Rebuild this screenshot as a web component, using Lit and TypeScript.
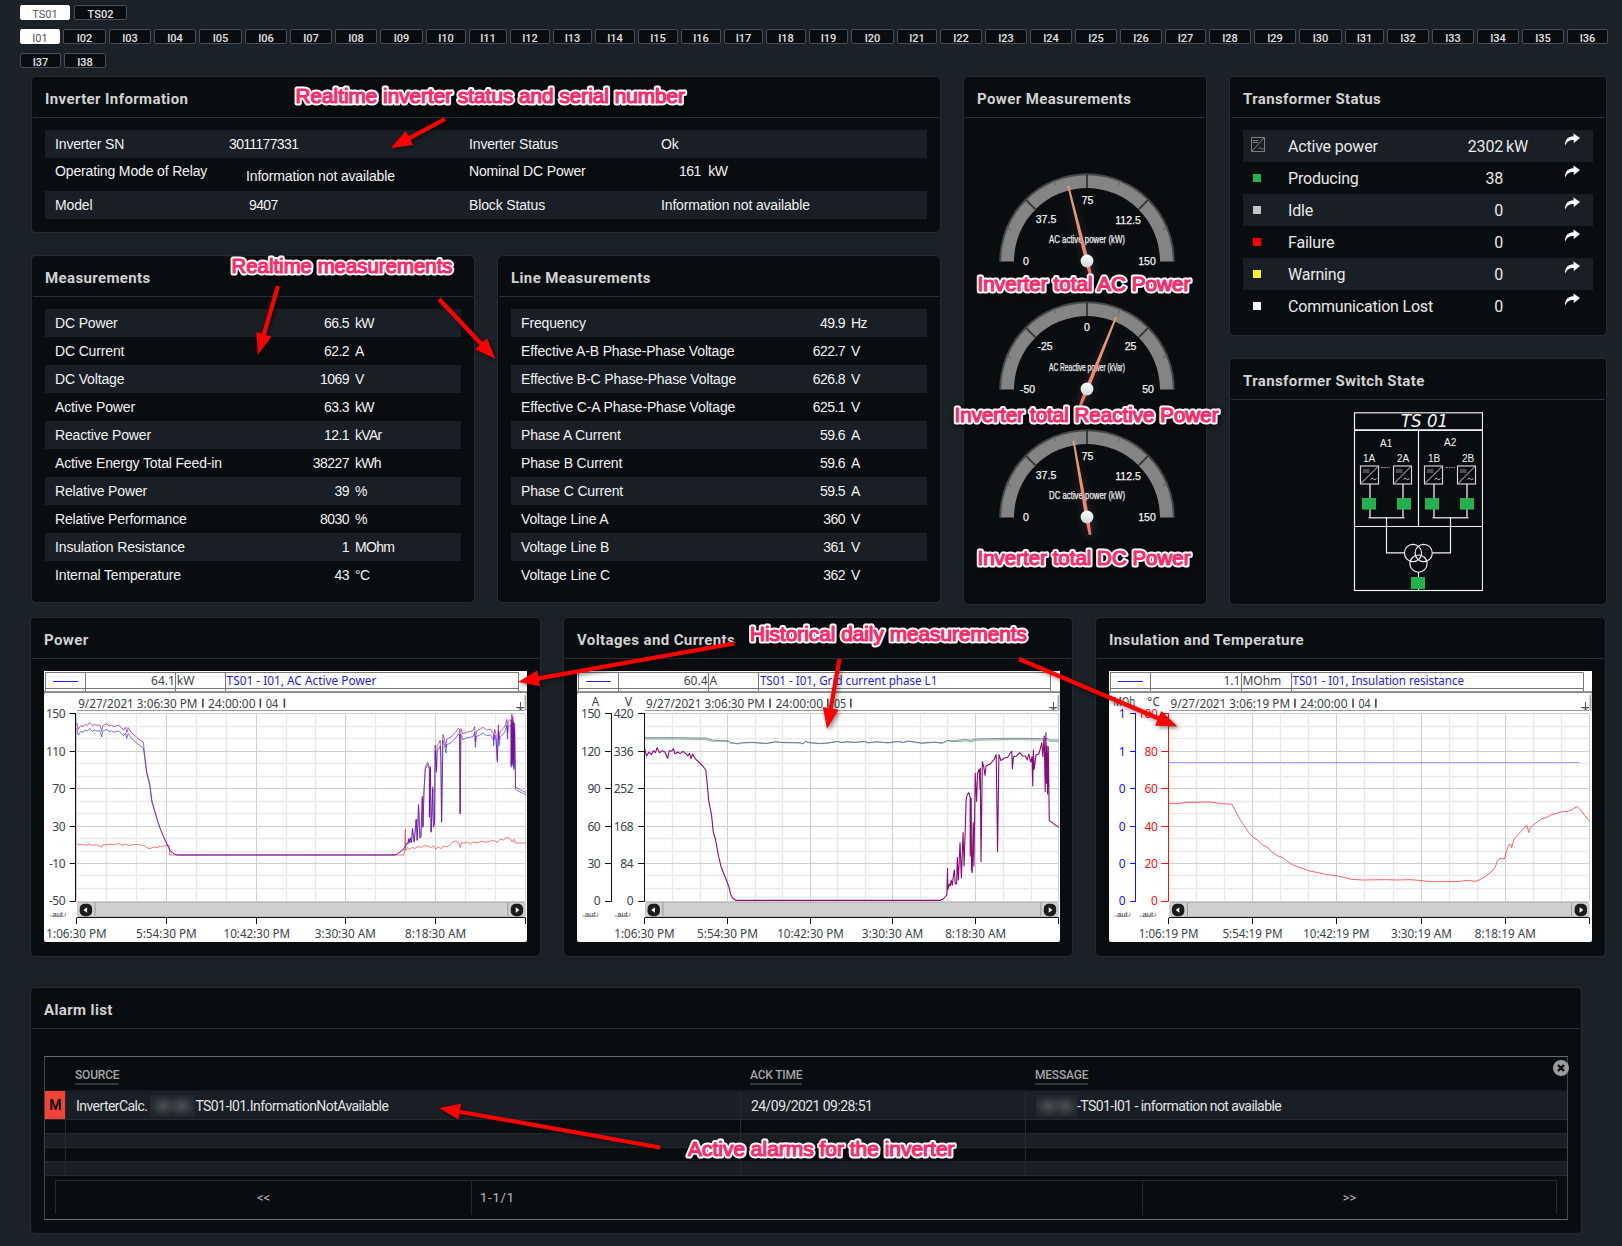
import { LitElement, html, svg, css } from "lit";
import { customElement, property } from "lit/decorators.js";

type Pt = [number, number];

/* ---------- data ---------- */

const inverterEdges = [
  20, 63, 109, 154, 199, 245, 290, 335, 380, 426, 469, 510, 553, 595, 638, 681, 724, 766, 809, 851, 897, 940, 985,
  1030, 1075, 1120, 1165, 1209, 1254, 1299, 1345, 1387, 1432, 1477, 1522, 1567, 1611,
];
const inverterTabs = inverterEdges.slice(0, -1).map((x, i) => ({
  name: "I" + String(i + 1).padStart(2, "0"),
  width: inverterEdges[i + 1] - x - 3,
}));

const measurements = [
  ["DC Power", "66.5", "kW"],
  ["DC Current", "62.2", "A"],
  ["DC Voltage", "1069", "V"],
  ["Active Power", "63.3", "kW"],
  ["Reactive Power", "12.1", "kVAr"],
  ["Active Energy Total Feed-in", "38227", "kWh"],
  ["Relative Power", "39", "%"],
  ["Relative Performance", "8030", "%"],
  ["Insulation Resistance", "1", "MOhm"],
  ["Internal Temperature", "43", "°C"],
];
const lineMeasurements = [
  ["Frequency", "49.9", "Hz"],
  ["Effective A-B Phase-Phase Voltage", "622.7", "V"],
  ["Effective B-C Phase-Phase Voltage", "626.8", "V"],
  ["Effective C-A Phase-Phase Voltage", "625.1", "V"],
  ["Phase A Current", "59.6", "A"],
  ["Phase B Current", "59.6", "A"],
  ["Phase C Current", "59.5", "A"],
  ["Voltage Line A", "360", "V"],
  ["Voltage Line B", "361", "V"],
  ["Voltage Line C", "362", "V"],
];
const statusRows = [
  ["Active power", "2302", "kW", "inverter"],
  ["Producing", "38", "", "#22b14c"],
  ["Idle", "0", "", "#c3c3c3"],
  ["Failure", "0", "", "#ff0000"],
  ["Warning", "0", "", "#fff21f"],
  ["Communication Lost", "0", "", "#ffffff"],
];

/* ---------- card ---------- */

@customElement("dash-card")
class DashCard extends LitElement {
  @property() heading = "";
  static styles = css`
    :host {
      display: flex;
      flex-direction: column;
      box-sizing: border-box;
      border: 1px solid #252b30;
      border-radius: 5px;
      background: #0a0d0f;
    }
    .head {
      height: 40px;
      box-sizing: border-box;
      padding: 4px 0 0 12px;
      margin: 0 1px;
      display: flex;
      align-items: center;
      font: 700 15px Roboto, "Liberation Sans", sans-serif;
      letter-spacing: 0.38px;
      color: #d2d2d2;
      white-space: nowrap;
    }
    .rule {
      height: 1px;
      margin: 0 1px;
      background: #25313a;
    }
    .body {
      flex: 1;
      padding: 12px 13px 0;
    }
  `;
  render() {
    return html`<div class="head">${this.heading}</div>
      <div class="rule"></div>
      <div class="body"><slot></slot></div>`;
  }
}

/* ---------- value table ---------- */

@customElement("value-table")
class ValueTable extends LitElement {
  @property({ attribute: false }) rows: string[][] = [];
  @property({ type: Number }) edge = 303;
  static styles = css`
    :host {
      display: block;
      font: 14px "Liberation Sans", Arial, sans-serif;
      letter-spacing: -0.15px;
      color: #f2f2f2;
    }
    .row {
      display: flex;
      align-items: center;
      height: 28px;
      box-sizing: border-box;
      padding: 0 0 1px 10px;
      white-space: nowrap;
    }
    .row:nth-child(odd) {
      background: #191f25;
    }
    .value {
      flex: 1;
      text-align: right;
      letter-spacing: -0.55px;
    }
    .unit {
      letter-spacing: -0.7px;
    }
    .lead {
      display: flex;
      padding-right: 6px;
      box-sizing: border-box;
    }
  `;
  render() {
    return this.rows.map(
      ([label, value, unit]) => html`<div class="row">
        <div class="lead" style="width:${this.edge - 3}px"><span>${label}</span><span class="value">${value}</span></div>
        <span class="unit">${unit}</span>
      </div>`
    );
  }
}

/* ---------- gauge ---------- */

@customElement("half-gauge")
class HalfGauge extends LitElement {
  @property() caption = "";
  @property({ attribute: false }) labels: { t: string; x: number; y: number }[] = [];
  @property({ type: Number }) angle = 0;
  static styles = css`
    :host {
      display: block;
      height: 128px;
    }
    svg {
      display: block;
      overflow: visible;
    }
    .t {
      font: 10.5px "Liberation Sans", Arial, sans-serif;
      fill: #f2f2f2;
      stroke: #f2f2f2;
      stroke-width: 0.25;
    }
  `;
  render() {
    const ticks = [1, 2, 3, 4, 5, 6, 7].map((i) => {
      const a = Math.PI - (i * Math.PI) / 8;
      const major = i % 2 === 0;
      const r0 = major ? 73 : 82;
      return svg`<line x1=${Math.cos(a) * r0} y1=${-Math.sin(a) * r0} x2=${Math.cos(a) * 87} y2=${-Math.sin(a) * 87}
        stroke=${major ? "#3a3a3a" : "#5e5e5e"} stroke-width=${major ? 2 : 1} />`;
    });
    return html`<svg width="216" height="128" viewBox="-110 -88 216 128">
      <defs>
        <linearGradient id="n" gradientUnits="userSpaceOnUse" x1="0" y1="-76" x2="0" y2="18">
          <stop offset="0" stop-color="#e0a173" />
          <stop offset="0.6" stop-color="#ef8a7a" />
          <stop offset="1" stop-color="#f56f70" />
        </linearGradient>
        <linearGradient id="k" x1="0" y1="0" x2="0" y2="1">
          <stop offset="0" stop-color="#ffffff" />
          <stop offset="1" stop-color="#d4d4d4" />
        </linearGradient>
        <filter id="g" x="-200%" y="-20%" width="500%" height="140%"><feGaussianBlur stdDeviation="5" /></filter>
      </defs>
      <path d="M-87.7 0A87.7 87.7 0 0 1 87.7 0V1H73V0A73 73 0 0 0 -73 0V1H-87.7Z" fill="#484848" />
      <path d="M-85.7 0A85.7 85.7 0 0 1 85.7 0H73A73 73 0 0 0 -73 0Z" fill="#848484" />
      ${ticks}
      ${this.labels.map(
        (l) => svg`<text class="t" x=${l.x} y=${l.y} text-anchor="middle">${l.t}</text>`
      )}
      <text class="t" x="-38" y="-18.5" textLength="76" lengthAdjust="spacingAndGlyphs">${this.caption}</text>
      <g transform="rotate(${this.angle})">
        <path d="M-2 18L0 -76L3 18Z" fill="#ffffff" opacity="0.22" filter="url(#g)" />
        <path d="M-0.9 -77.5H0.9L2 0L1.4 18H-1.4L-2 0Z" fill="url(#n)" />
      </g>
      <circle r="6.4" fill="url(#k)" />
    </svg>`;
  }
}

/* ---------- trend chart ---------- */

interface Axis {
  x: number;
  tick: number;
  end: number;
  color: string;
  values: string[];
  unit?: string;
  unitX?: number;
  unitLen?: number;
  autoX: number;
}
interface Trace {
  color: string;
  pts: Pt[];
  opacity?: number;
  width?: number;
}
interface Trend {
  scale: number;
  left: number;
  cells: number[];
  sample: Pt;
  value: string;
  unit: string;
  name: string;
  nameEnd: number;
  stamp: { parts: { t: string; a: number; b: number }[]; bars: number[] };
  axes: Axis[];
  grid: number[];
  knobs: number[];
  times: { t: string; a: number; b: number }[];
  traces: Trace[];
}

const tickY = [310, 424, 535, 649, 760, 873];

@customElement("trend-chart")
class TrendChart extends LitElement {
  @property({ attribute: false }) trend!: Trend;
  static styles = css`
    :host {
      display: block;
    }
    svg {
      display: block;
    }
    text {
      font: 12px "Noto Sans", "Open Sans", sans-serif;
      fill: #3a4248;
    }
    .name {
      fill: #1a1af0;
    }
    .auto {
      font: 8px "Liberation Sans", Arial, sans-serif;
      fill: #444;
    }
  `;
  render() {
    const c = this.trend;
    const X = (v: number) => +((v - c.left) / c.scale).toFixed(2);
    const Y = (v: number) => +((v - 183) / 3).toFixed(2);
    const fit = (t: string, a: number, b: number, y: number, cls = "") =>
      svg`<text class=${cls} x=${X(a)} y=${Y(y)} textLength=${X(b) - X(a)} lengthAdjust="spacingAndGlyphs">${t}</text>`;
    const [l0, l1, l2, l3, l4] = c.cells.map(X);
    const gx0 = X(c.grid[0]);
    const gx1 = X(c.grid[5]);
    const snap = (v: number) => Math.floor(v) + 0.5;
    const minorX: number[] = [];
    const minorY: number[] = [];
    for (let i = 0; i < 5; i++)
      for (let k = 1; k < 3; k++) {
        minorX.push(X(c.grid[i] + ((c.grid[i + 1] - c.grid[i]) * k) / 3));
        minorY.push(Y(tickY[i] + ((tickY[i + 1] - tickY[i]) * k) / 3));
      }
    return html`<svg width="483" height="271" viewBox="0 0 483 271">
      <rect width="483" height="20.6" fill="#fff" />
      <rect y="20.6" width="483" height="3" fill="#8a8a8a" />
      <rect y="22" width="483" height="249" rx="2" fill="#fff" />
      <path d="M${snap(l0)} 20V1.5H${snap(l4)}V20M${snap(l0)} 17.5H${snap(l4)}M${snap(l1)} 1.5V20M${snap(l2)} 1.5V20M${snap(l3)} 1.5V20"
        fill="none" stroke="#777" />
      <line x1=${X(c.sample[0])} x2=${X(c.sample[1])} y1="10.5" y2="10.5" stroke="#2020f0" />
      <text x=${l2 - 1} y="14" text-anchor="end">${c.value}</text>
      <text x=${l2 + 1} y="14">${c.unit}</text>
      ${fit(c.name, c.cells[3] + 4, c.nameEnd, 225, "name")}
      ${c.stamp.parts.map((p) => fit(p.t, p.a, p.b, 294))}
      ${c.stamp.bars.map((b) => svg`<rect x=${X(b) - 0.8} y=${Y(266)} width="1.6" height="9" fill="#444" />`)}
      <line x1=${gx0} x2="480" y1="39.5" y2="39.5" stroke="#9a9a9a" />
      <path d="M481.5 24V40" stroke="#aaa" stroke-width="2" />
      <path d="M472 36.5H480M476.5 31V39M474.5 37L476.5 39L478.5 37" fill="none" stroke="#555" />
      ${minorX.map((x) => svg`<line x1=${snap(x)} x2=${snap(x)} y1="43" y2="230" stroke="#e9e9e9" stroke-width="1.4" />`)}
      ${minorY.map((y) => svg`<line x1=${gx0} x2=${gx1} y1=${snap(y)} y2=${snap(y)} stroke="#e9e9e9" stroke-width="1.4" />`)}
      ${c.grid.map((x) => svg`<line x1=${snap(X(x))} x2=${snap(X(x))} y1="43" y2="230" stroke="#cfcfcf" />`)}
      ${tickY.map((y) => svg`<line x1=${gx0} x2=${gx1} y1=${snap(Y(y))} y2=${snap(Y(y))} stroke="#cfcfcf" />`)}
      ${c.traces.map(
        (t) => svg`<polyline points=${t.pts.map((p) => X(p[0]) + "," + Y(p[1])).join(" ")} fill="none"
          stroke=${t.color} stroke-opacity=${t.opacity ?? 1} stroke-width=${t.width ?? 1} stroke-linejoin="round" />`
      )}
      ${c.axes.map(
        (a) => svg`
          <path d="M${snap(X(a.x))} 42V230.5${tickY.map((y) => `M${X(a.tick)} ${snap(Y(y))}H${snap(X(a.x))}`).join("")}"
            fill="none" stroke=${a.color} />
          ${a.values.map(
            (v, i) => svg`<text x=${X(a.end)} y=${Y(tickY[i]) + 4.2} text-anchor="end" letter-spacing="-0.4"
              style="fill:${a.color === "#111" ? "#3a4248" : a.color}">${v}</text>`
          )}
          ${a.unit ? fit(a.unit, a.unitX!, a.unitX! + a.unitLen!, 288) : ""}
          ${fit("aut", a.autoX + 9, a.autoX + 40, 922, "auto")}
          <path d="M${X(a.autoX)} ${Y(918)}H${X(a.autoX + 47)}V${Y(908)}" fill="none" stroke="#777" stroke-width="0.7" />`
      )}
      <rect x=${gx0 + 0.5} y="231" width=${gx1 - gx0 - 0.5} height="15" rx="2" fill="#b9b9b9" />
      <rect x=${gx0 + 1.5} y="232" width=${gx1 - gx0 - 2.5} height="13" fill="#d0d0d0" />
      <path d="M${X(c.knobs[0] + 27)} 232V245M${X(c.knobs[1] - 27)} 232V245" stroke="#999" />
      ${c.knobs.map((k, i) => {
        const x = X(k);
        return svg`<rect x=${x - 6.2} y="232.8" width="12.4" height="12.4" rx="5" fill="#1c1c1c" />
          <path d=${i ? `M${x - 1.2} 236.2L${x + 2.4} 239L${x - 1.2} 241.8Z` : `M${x + 1.2} 236.2L${x - 2.4} 239L${x + 1.2} 241.8Z`} fill="#fff" />`;
      })}
      <path d="M${gx0} 246.5H${gx1}${c.grid.map((x) => `M${Math.min(snap(X(x)), 482.5)} 247V253`).join("")}" stroke="#111" fill="none" />
      ${c.times.map((t) => fit(t.t, t.a, t.b, 983))}
    </svg>`;
  }
}

const P = (s: string): Pt[] => s.trim().split(/\s+/).map((q) => q.split(",").map(Number) as Pt);

const apparent = P(`168,338 172,358 180,347 187,350 193,343 200,346 206,338 214,347 221,343 228,346 236,345 242,364
 244,348 248,345 257,341 263,348 270,345 278,350 285,347 292,346 300,353 306,360 312,352 316,368 320,353 328,366 336,374
 350,386 365,397 368,430 375,485 384,520 390,570 398,600 405,625 414,653 425,680 437,706 445,722 458,733 466,735
 1108,735 1116,732 1128,722 1138,712 1145,697 1148,700 1150,685 1153,697 1155,683 1158,696 1161,655 1166,695 1172,627
 1175,690 1179,583 1183,683 1186,680 1190,558 1192,650 1195,540 1199,470 1206,457 1211,470 1211,620 1214,470 1216,665
 1218,620 1221,530 1223,650 1226,640 1228,405 1232,480 1234,405 1239,400 1243,391 1245,440 1247,635 1251,373 1256,390
 1260,412 1262,388 1275,381 1290,365 1296,355 1300,358 1302,610 1304,356 1310,372 1320,367 1330,365 1340,362 1345,350
 1347,395 1350,363 1360,358 1370,352 1380,360 1392,358 1400,370 1401,390 1404,358 1408,372 1412,450 1415,345 1417,390
 1420,365 1430,355 1436,345 1440,328 1442,370 1444,333 1448,330 1452,330 1453,465 1455,312 1456,460 1458,320 1459,450
 1460,335 1461,472 1463,340 1466,532 1497,548`);
const active = apparent.map(([x, y]): Pt => [x, y < 420 ? y + 17 : y < 600 ? y + 7 : y < 730 ? y + 2 : y]);
const reactive = P(`168,701 175,704 185,703 196,706 205,702 215,706 226,704 235,708 242,711 246,703 256,705 264,702
 275,704 285,702 292,700 300,706 312,703 325,707 335,703 350,704 366,706 375,713 385,716 395,711 405,713 415,709 425,708
 435,706 441,706 443,735 1136,735 1138,716 1140,657 1141,722 1146,712 1152,718 1160,712 1168,716 1177,710 1186,712
 1196,707 1207,708 1215,713 1222,708 1230,718 1236,710 1245,716 1254,708 1262,711 1272,704 1280,696 1288,693 1298,699
 1302,713 1306,698 1316,699 1324,696 1333,702 1340,696 1352,698 1366,694 1378,697 1392,693 1404,692 1412,698 1420,688
 1430,690 1440,682 1450,686 1456,696 1461,688 1465,699 1497,699`);
const current = P(`280,415 286,438 293,426 300,434 306,422 312,428 317,413 324,428 332,422 340,426 348,445 353,422 360,424
 365,416 370,432 378,426 385,431 393,424 402,431 408,438 413,430 417,446 422,432 430,446 440,456 452,468 461,480 464,510
 470,575 478,615 483,665 490,690 498,735 506,770 518,800 530,832 534,852 542,866 550,871 1155,871 1164,866 1174,855
 1176,775 1177,838 1181,822 1184,828 1187,810 1190,826 1193,800 1196,780 1199,822 1203,822 1205,742 1208,810 1213,698
 1217,804 1222,668 1225,768 1229,640 1231,570 1234,555 1239,548 1243,562 1243,738 1246,565 1247,780 1249,788 1252,638
 1254,768 1258,490 1262,574 1265,490 1270,478 1272,538 1273,475 1275,755 1279,455 1283,470 1287,496 1290,468 1302,462
 1314,448 1320,434 1324,725 1328,434 1334,452 1344,444 1354,442 1362,428 1366,424 1368,476 1371,440 1380,438 1390,428
 1398,438 1406,438 1412,450 1416,432 1422,456 1426,440 1428,528 1430,420 1432,478 1438,434 1446,432 1450,418 1455,398
 1458,440 1462,378 1465,545 1467,368 1469,520 1470,408 1472,552 1474,410 1477,632 1505,652`);
const volt = P(`280,383 330,383 380,383 430,384 460,384 480,390 500,392 528,393 534,398 545,399 556,401 566,398 600,397 640,400
 668,395 684,397 740,398 748,401 756,394 770,398 800,400 820,399 850,394 862,397 880,395 900,397 930,394 942,398 965,395
 1000,398 1030,394 1045,397 1060,393 1100,399 1140,396 1160,399 1176,391 1190,393 1206,391 1230,388 1245,391 1259,387
 1300,386 1340,385 1400,385 1450,386 1472,386 1480,390 1505,390`);
const temp = P(`257,580 280,581 310,577 370,576 385,577 410,581 440,583 450,603 460,623 478,652 490,670 500,680 515,692 530,706
 540,710 555,725 570,737 585,742 612,763 640,774 665,783 690,788 710,793 740,797 765,802 785,808 820,810 880,809 920,810
 955,809 990,812 1010,815 1060,815 1100,814 1120,811 1145,814 1155,810 1172,800 1190,786 1200,774 1208,752 1215,745
 1228,747 1233,726 1240,706 1246,702 1249,713 1256,687 1270,670 1282,658 1290,648 1294,648 1298,668 1302,654 1315,642
 1335,627 1350,622 1365,614 1395,605 1412,604 1425,598 1438,590 1446,597 1460,616 1474,634`);

const powerTrend: Trend = {
  scale: 2.958, left: 71, cells: [76, 193, 461, 607, 1475], sample: [98, 172],
  value: "64.1", unit: "kW", name: "TS01 - I01, AC Active Power", nameEnd: 1054,
  stamp: {
    parts: [{ t: "9/27/2021 3:06:30 PM", a: 172, b: 525 }, { t: "24:00:00", a: 556, b: 697 }, { t: "04", a: 727, b: 764 }],
    bars: [541, 711, 782],
  },
  axes: [{ x: 165, tick: 147, end: 134, color: "#111", values: ["150", "110", "70", "30", "-10", "-50"], autoX: 87 }],
  grid: [168, 433, 699, 963, 1229, 1496], knobs: [195, 1470],
  times: [
    { t: "1:06:30 PM", a: 78, b: 256 }, { t: "5:54:30 PM", a: 343, b: 523 }, { t: "10:42:30 PM", a: 602, b: 799 },
    { t: "3:30:30 AM", a: 872, b: 1053 }, { t: "8:18:30 AM", a: 1139, b: 1320 },
  ],
  traces: [
    { color: "#ff3030", pts: reactive, opacity: 0.65 },
    { color: "#2a2aff", pts: active, opacity: 0.65 },
    { color: "#800080", pts: apparent, opacity: 0.6 },
  ],
};
const voltTrend: Trend = {
  scale: 2.958, left: 80, cells: [84, 203, 469, 617, 1481], sample: [107, 180],
  value: "60.4", unit: "A", name: "TS01 - I01, Grid current phase L1", nameEnd: 1146,
  stamp: {
    parts: [{ t: "9/27/2021 3:06:30 PM", a: 284, b: 636 }, { t: "24:00:00", a: 667, b: 808 }, { t: "05", a: 840, b: 876 }],
    bars: [651, 822, 890],
  },
  axes: [
    { x: 181, tick: 163, end: 149, color: "#111", values: ["150", "120", "90", "60", "30", "0"], unit: "A", unitX: 124, unitLen: 22, autoX: 95 },
    { x: 279, tick: 261, end: 246, color: "#111", values: ["420", "336", "252", "168", "84", "0"], unit: "V", unitX: 221, unitLen: 22, autoX: 190 },
  ],
  grid: [280, 526, 770, 1014, 1259, 1505], knobs: [307, 1479],
  times: [
    { t: "1:06:30 PM", a: 190, b: 369 }, { t: "5:54:30 PM", a: 435, b: 615 }, { t: "10:42:30 PM", a: 672, b: 869 },
    { t: "3:30:30 AM", a: 922, b: 1104 }, { t: "8:18:30 AM", a: 1169, b: 1349 },
  ],
  traces: [
    { color: "#2f8a2f", pts: volt.map(([x, y]): Pt => [x, x < 500 || x > 1200 ? y + 4 : y + 1]), opacity: 0.6 },
    { color: "#5a5aa8", pts: volt, opacity: 0.7 },
    { color: "#8b0a78", pts: current, width: 1.1 },
  ],
};
const insulationTrend: Trend = {
  scale: 2.893, left: 84, cells: [88, 204, 467, 611, 1457], sample: [110, 182],
  value: "1.1", unit: "MOhm", name: "TS01 - I01, Insulation resistance", nameEnd: 1111,
  stamp: {
    parts: [{ t: "9/27/2021 3:06:19 PM", a: 262, b: 608 }, { t: "24:00:00", a: 637, b: 774 }, { t: "04", a: 806, b: 841 }],
    bars: [622, 790, 856],
  },
  axes: [
    { x: 160, tick: 145, end: 131, color: "#1010ff", values: ["1", "1", "0", "0", "0", "0"], unit: "MOh", unitX: 96, unitLen: 64, autoX: 98 },
    { x: 256, tick: 235, end: 224, color: "#ff1010", values: ["100", "80", "60", "40", "20", "0"], unit: "°C", unitX: 195, unitLen: 36, autoX: 172 },
  ],
  grid: [257, 499, 742, 989, 1231, 1474], knobs: [284, 1449],
  times: [
    { t: "1:06:19 PM", a: 170, b: 343 }, { t: "5:54:19 PM", a: 412, b: 586 }, { t: "10:42:19 PM", a: 646, b: 838 },
    { t: "3:30:19 AM", a: 900, b: 1076 }, { t: "8:18:19 AM", a: 1142, b: 1319 },
  ],
  traces: [
    { color: "#3030ff", pts: [[257, 457.5], [1445, 457.5]], opacity: 0.45 },
    { color: "#ff3030", pts: temp, opacity: 0.75 },
  ],
};

/* ---------- single-line diagram ---------- */

@customElement("switch-diagram")
class SwitchDiagram extends LitElement {
  static styles = css`
    :host {
      display: flex;
      justify-content: center;
    }
    text {
      font: 10px "Liberation Sans", Arial, sans-serif;
      fill: #f4f4f4;
    }
    .title {
      font: italic 17px "DejaVu Sans", sans-serif;
    }
  `;
  render() {
    const units: [number, string, number, number, number][] = [
      [1360.5, "1A", 1363, 1370, 1362],
      [1393.5, "2A", 1397, 1403, 1397],
      [1424.5, "1B", 1428, 1434, 1425],
      [1457.5, "2B", 1462, 1467, 1460],
    ];
    return html`<svg width="130" height="180" viewBox="1353 412 130 180" fill="none" stroke="#f4f4f4" stroke-width="1.15">
      <rect x="1354.5" y="412.8" width="128" height="177.7" />
      <path d="M1354.5 430.2H1482.5" stroke-width="1.7" />
      <path d="M1418.5 430V526.5M1354.5 526.5H1482.5" />
      <text class="title" stroke="none" x="1401" y="427.3" textLength="47" lengthAdjust="spacingAndGlyphs">TS 01</text>
      <text stroke="none" x="1380" y="447">A1</text>
      <text stroke="none" x="1444" y="446">A2</text>
      <path d="M1381 467.5H1390M1446 467.5H1455" stroke="#888" stroke-dasharray="2 0.7" />
      ${units.map(
        ([bx, name, tx, lx, gx]) => svg`
          <text stroke="none" x=${tx} y="462">${name}</text>
          <path d="M${lx} 484V518" stroke="#c4c4c4" stroke-width="1.6" />
          <rect x=${bx} y="466" width="18" height="18" fill="#0a0d0f" stroke="#d8d8d8" />
          <path d="M${bx + 1} 483L${bx + 17} 467" stroke="#e8e8e8" stroke-width="0.9" />
          <path d="M${bx + 2.5} 470H${bx + 9}M${bx + 2.5} 472H${bx + 9}" stroke="#9a9a9a" stroke-width="0.9" />
          <path d="M${bx + 10} 479.5q1.6 -2.5 3 -0.5t3 -0.5" stroke="#cfcfcf" stroke-width="0.9" />
          <rect x=${gx} y="498" width="14" height="11.6" fill="#22b14c" stroke="none" />`
      )}
      <path d="M1368.5 517.7H1404.5M1432.5 517.7H1468.5" stroke="#c4c4c4" stroke-width="1.5" />
      <path d="M1386.5 517.5V552.8H1404.5M1450.5 517.5V552.8H1432.5M1418.5 572V577" />
      <circle cx="1413" cy="553" r="8.6" /><circle cx="1423.7" cy="553" r="8.6" /><circle cx="1418.5" cy="563.6" r="8.6" />
      <path d="M1418.5 588V590.5" />
      <rect x="1411" y="577" width="14" height="12" fill="#22b14c" stroke="none" />
    </svg>`;
  }
}

/* ---------- callouts over the dashboard ---------- */

const notes: [string, number, number, number][] = [
  ["Realtime inverter status and serial number", 295.5, 685, 103.3],
  ["Realtime measurements", 231.5, 452.5, 273.3],
  ["Inverter total AC Power", 977.5, 1190.5, 291.3],
  ["Inverter total Reactive Power", 954.5, 1218.5, 422.3],
  ["Inverter total DC Power", 977.5, 1190.5, 565.3],
  ["Historical daily measurements", 750, 1027, 640.5],
  ["Active alarms for the inverter", 688, 954.5, 1156.3],
];
const arrows: [number, number, number, number][] = [
  [445, 119, 391, 148],
  [278, 286, 258, 354.5],
  [439, 299, 495.5, 359],
  [734, 643.5, 518, 682],
  [839.5, 659, 827, 729],
  [1019, 659, 1177.5, 726.5],
  [660, 1147.5, 439, 1108],
];

@customElement("call-outs")
class CallOuts extends LitElement {
  static styles = css`
    :host {
      position: absolute;
      inset: 0;
      pointer-events: none;
    }
    svg {
      display: block;
    }
    text {
      font: 20px "Liberation Sans", Arial, sans-serif;
      stroke-linejoin: round;
    }
    .halo {
      fill: #fff;
      stroke: #fff;
      stroke-width: 5px;
      filter: drop-shadow(1px 2px 3px rgba(0, 0, 0, 0.6));
    }
    .ink {
      fill: #fb2a68;
      stroke: #fb2a68;
      stroke-width: 1.15px;
    }
    .arrow {
      fill: #ff0000;
      stroke: none;
      filter: drop-shadow(2px 2px 2px rgba(0, 0, 0, 0.45));
    }
  `;
  render() {
    return html`<svg width="1622" height="1246" viewBox="0 0 1622 1246">
      ${arrows.map(([x1, y1, x2, y2]) => {
        const len = Math.hypot(x2 - x1, y2 - y1);
        const deg = (Math.atan2(y2 - y1, x2 - x1) * 180) / Math.PI;
        return svg`<g class="arrow"><path transform="translate(${x1} ${y1}) rotate(${deg})"
          d="M0 -2.1H${len - 21}V-8L${len} 0L${len - 21} 8V2.1H0Z" /></g>`;
      })}
      ${notes.map(
        ([t, a, b, y]) => svg`<text class="halo" x=${a} y=${y} textLength=${b - a} lengthAdjust="spacingAndGlyphs" aria-hidden="true">${t}</text>
          <text class="ink" x=${a} y=${y} textLength=${b - a} lengthAdjust="spacingAndGlyphs">${t}</text>`
      )}
    </svg>`;
  }
}

/* ---------- page ---------- */

@customElement("app-root")
class AppRoot extends LitElement {
  static styles = css`
    :host {
      display: block;
      position: relative;
      width: 1622px;
      height: 1246px;
      overflow: hidden;
      background: #1a2127;
      font-family: Roboto, "Liberation Sans", sans-serif;
    }
    .tabs {
      padding: 5px 0 0 20px;
      height: 76px;
      box-sizing: border-box;
    }
    .tabrow {
      display: flex;
      flex-wrap: wrap;
      column-gap: 3px;
      height: 15px;
      margin-bottom: 9px;
    }
    .first {
      column-gap: 4px;
    }
    .tab {
      box-sizing: border-box;
      height: 15px;
      border: 1px solid #474f56;
      border-radius: 2px;
      background: #0a0d0f;
      color: #e2e2e2;
      font-size: 11px;
      font-weight: 500;
      line-height: 17px;
      text-align: center;
      overflow: hidden;
    }
    .on {
      background: #fff;
      color: #555;
      border-color: #fff;
      font-weight: 400;
    }
    .top {
      display: flex;
      gap: 22px;
      padding-left: 31px;
      height: 529px;
    }
    .left {
      width: 910px;
      display: flex;
      flex-direction: column;
      gap: 22px;
    }
    .info {
      height: 157px;
    }
    .pair {
      display: flex;
      gap: 22px;
      height: 348px;
    }
    .pair dash-card {
      width: 444px;
    }
    .power {
      width: 244px;
    }
    .right {
      width: 378px;
      display: flex;
      flex-direction: column;
      gap: 22px;
    }
    .status {
      height: 260px;
    }
    .switch {
      height: 247px;
    }
    .grid {
      display: grid;
      grid-template-columns: 414px 192px 1fr;
      height: 28px;
      box-sizing: border-box;
      padding-left: 10px;
      padding-bottom: 1px;
      align-items: center;
      font: 14px "Liberation Sans", Arial, sans-serif;
      letter-spacing: -0.15px;
      color: #f2f2f2;
      white-space: nowrap;
    }
    .grid.alt {
      background: #191f25;
    }
    .grid.tall {
      height: 33px;
      align-items: start;
      padding-top: 5px;
    }
    .kv {
      display: grid;
    }
    .c1 {
      grid-template-columns: 174px 1fr;
    }
    .c2 {
      grid-template-columns: 191px 1fr;
    }
    .c3 {
      grid-template-columns: 194px 1fr;
    }
    .tight {
      letter-spacing: -0.65px;
    }
    .low {
      padding-top: 5px;
    }
    .indent {
      padding-left: 18px;
      word-spacing: 4px;
      letter-spacing: -0.5px;
    }
    .gauges {
      padding-top: 43px;
    }
    .srow {
      display: grid;
      grid-template-columns: 45px 165px 50px 61px 1fr;
      height: 32px;
      color: #e9e9e9;
      font-size: 16px;
      letter-spacing: -0.2px;
      line-height: 33px;
      white-space: nowrap;
    }
    .srow.shade {
      background: #191f25;
    }
    .num {
      text-align: right;
    }
    .unit {
      padding-left: 3px;
    }
    .go {
      padding-top: 3px;
      line-height: 0;
    }
    .sq {
      padding: 11.5px 0 0 10px;
      line-height: 0;
    }
    .charts {
      display: flex;
      gap: 22px;
      padding: 12px 0 0 30px;
    }
    .charts dash-card {
      width: 511px;
      height: 340px;
    }
    .charts .mid {
      width: 510px;
    }
    .alarms {
      width: 1552px;
      height: 247px;
      margin: 30px 0 0 30px;
    }
    .table {
      margin-top: 15px;
      box-sizing: border-box;
      width: 1524px;
      height: 164px;
      border: 1px solid #666a6c;
      border-left-color: #3e464c;
      border-right-color: #3e464c;
      font-size: 14px;
      color: #e4e4e4;
    }
    .arow {
      display: grid;
      grid-template-columns: 21px 675px 285px 1fr;
      height: 14px;
      box-sizing: border-box;
      border-bottom: 1px solid #222b32;
      white-space: nowrap;
    }
    .arow > div {
      border-right: 1px solid #222b32;
      padding-left: 9px;
      display: flex;
      align-items: center;
    }
    .arow > div:last-child {
      border-right: 0;
    }
    .arow.shade {
      background: #191f25;
    }
    .arow.main {
      height: 29px;
      letter-spacing: -0.56px;
    }
    .arow.main > div {
      padding-top: 1px;
      padding-left: 10px;
    }
    .arow.header {
      height: 34px;
      border-color: #14191d;
    }
    .arow.header > div {
      border-color: transparent;
      padding-top: 5px;
    }
    .arow.header > div.between {
      padding-top: 0;
      align-items: flex-start;
      justify-content: space-between;
    }
    .hd {
      font-size: 12px;
      font-weight: 500;
      color: #a4a4a4;
      border-bottom: 2px solid #333638;
      line-height: 15px;
      letter-spacing: -0.2px;
    }
    .between .hd {
      margin-top: 10.5px;
    }
    .arow.main > .mark {
      background: #f44336;
      color: #0a0d0f;
      font-weight: 700;
      padding: 0;
      justify-content: center;
    }
    .close {
      margin: 2px -3px 0 0;
    }
    .hidden {
      display: block;
      width: 45px;
      height: 22px;
      margin-left: 3px;
      background: radial-gradient(ellipse 13px 10px at 30% 50%, #4b5054, transparent),
        radial-gradient(ellipse 13px 10px at 70% 50%, #4b5054, transparent), #22282d;
    }
    .narrow {
      width: 41px;
      margin-left: 0;
    }
    .pager {
      display: grid;
      grid-template-columns: 415px 671px 1fr;
      margin: 4px 10px 0 10px;
      height: 34px;
      box-sizing: border-box;
      border: 1px solid #222b32;
      border-bottom: 0;
      font-size: 13px;
      color: #bcbcbc;
      line-height: 34px;
      text-align: center;
    }
    .pager > div + div {
      border-left: 1px solid #222b32;
    }
    .pager .count {
      text-align: left;
      padding-left: 8px;
      letter-spacing: 0.8px;
    }
  `;

  render() {
    const arrow = html`<svg width="17" height="14" viewBox="0 0 17 14">
      <path d="M9.5 0.5L16 5L9.8 10V7C5.8 6.8 3.2 8.2 1 12.8C0.6 6.8 4 3.4 9.5 3.2Z" fill="#fff" />
    </svg>`;
    return html`
      <div class="tabs">
        <div class="tabrow first">
          <div class="tab on" style="width:50px">TS01</div>
          <div class="tab" style="width:53px">TS02</div>
        </div>
        <div class="tabrow">
          ${inverterTabs.map((t, i) => html`<div class="tab ${i ? "" : "on"}" style="width:${t.width}px">${t.name}</div>`)}
        </div>
        <div class="tabrow">
          <div class="tab" style="width:41px">I37</div>
          <div class="tab" style="width:42px">I38</div>
        </div>
      </div>

      <div class="top">
        <div class="left">
          <dash-card class="info" heading="Inverter Information">
            <div class="grid alt">
              <div class="kv c1"><span>Inverter SN</span><span class="tight">3011177331</span></div>
              <span>Inverter Status</span><span>Ok</span>
            </div>
            <div class="grid tall">
              <div class="kv c2"><span>Operating Mode of Relay</span><span class="low">Information not available</span></div>
              <span>Nominal DC Power</span><span class="indent">161 kW</span>
            </div>
            <div class="grid alt">
              <div class="kv c3"><span>Model</span><span class="tight">9407</span></div>
              <span>Block Status</span><span>Information not available</span>
            </div>
          </dash-card>
          <div class="pair">
            <dash-card heading="Measurements"><value-table .rows=${measurements} .edge=${303}></value-table></dash-card>
            <dash-card heading="Line Measurements"><value-table .rows=${lineMeasurements} .edge=${333}></value-table></dash-card>
          </div>
        </div>

        <dash-card class="power" heading="Power Measurements">
          <div class="gauges">
            <half-gauge caption="AC active power (kW)" .angle=${-14}
              .labels=${[{ t: "0", x: -61, y: 3.5 }, { t: "37.5", x: -41, y: -38.5 }, { t: "75", x: 0.5, y: -57.5 }, { t: "112.5", x: 41, y: -37.5 }, { t: "150", x: 60, y: 3.5 }]}></half-gauge>
            <half-gauge caption="AC Reactive power (kVar)" .angle=${22}
              .labels=${[{ t: "-50", x: -59.5, y: 3.5 }, { t: "-25", x: -42, y: -39.5 }, { t: "0", x: 0, y: -58.5 }, { t: "25", x: 43.5, y: -39.5 }, { t: "50", x: 61, y: 3.5 }]}></half-gauge>
            <half-gauge caption="DC active power (kW)" .angle=${-10}
              .labels=${[{ t: "0", x: -61, y: 3.5 }, { t: "37.5", x: -41, y: -38.5 }, { t: "75", x: 0.5, y: -57.5 }, { t: "112.5", x: 41, y: -37.5 }, { t: "150", x: 60, y: 3.5 }]}></half-gauge>
          </div>
        </dash-card>

        <div class="right">
          <dash-card class="status" heading="Transformer Status">
            ${statusRows.map(
              ([label, value, unit, mark], i) => html`<div class="srow ${i % 2 ? "" : "shade"}">
                ${mark === "inverter"
                  ? html`<span class="go"><svg width="30" height="22" viewBox="0 0 30 22" fill="none" stroke="#8c8c8c">
                      <path d="M8.5 4.5H21.5V18.5H8.5ZM9 18L21 5M10 7.5H15M10 9.5H15" stroke-width="0.9" />
                      <path d="M15.5 15.5q1.4 -2 2.6 0t2.6 -0.5" stroke-width="0.9" />
                    </svg></span>`
                  : html`<span class="sq"><svg width="8" height="8"><rect width="8" height="8" fill=${mark} /></svg></span>`}
                <span>${label}</span><span class="num">${value}</span><span class="unit">${unit}</span>
                <span class="go">${arrow}</span>
              </div>`
            )}
          </dash-card>
          <dash-card class="switch" heading="Transformer Switch State"><switch-diagram></switch-diagram></dash-card>
        </div>
      </div>

      <div class="charts">
        <dash-card heading="Power"><trend-chart .trend=${powerTrend}></trend-chart></dash-card>
        <dash-card class="mid" heading="Voltages and Currents"><trend-chart .trend=${voltTrend}></trend-chart></dash-card>
        <dash-card heading="Insulation and Temperature"><trend-chart .trend=${insulationTrend}></trend-chart></dash-card>
      </div>

      <dash-card class="alarms" heading="Alarm list">
        <div class="table">
          <div class="arow header">
            <div></div>
            <div><span class="hd">SOURCE</span></div>
            <div><span class="hd">ACK TIME</span></div>
            <div class="between">
              <span class="hd">MESSAGE</span>
              <svg class="close" width="18" height="18" viewBox="-9 -9 18 18">
                <circle r="8" fill="#9b9b9b" />
                <path d="M-3 -3L3 3M3 -3L-3 3" stroke="#0a0d0f" stroke-width="2.4" />
              </svg>
            </div>
          </div>
          <div class="arow main shade">
            <div class="mark">M</div>
            <div>InverterCalc.<span class="hidden"></span>TS01-I01.InformationNotAvailable</div>
            <div>24/09/2021 09:28:51</div>
            <div><span class="hidden narrow"></span>-TS01-I01 - information not available</div>
          </div>
          ${[0, 1, 2, 3].map(
            (i) => html`<div class="arow ${i % 2 ? "shade" : ""}"><div></div><div></div><div></div><div></div></div>`
          )}
          <div class="pager">
            <div>&lt;&lt;</div>
            <div class="count">1-1/1</div>
            <div>&gt;&gt;</div>
          </div>
        </div>
      </dash-card>

      <call-outs></call-outs>
    `;
  }
}
